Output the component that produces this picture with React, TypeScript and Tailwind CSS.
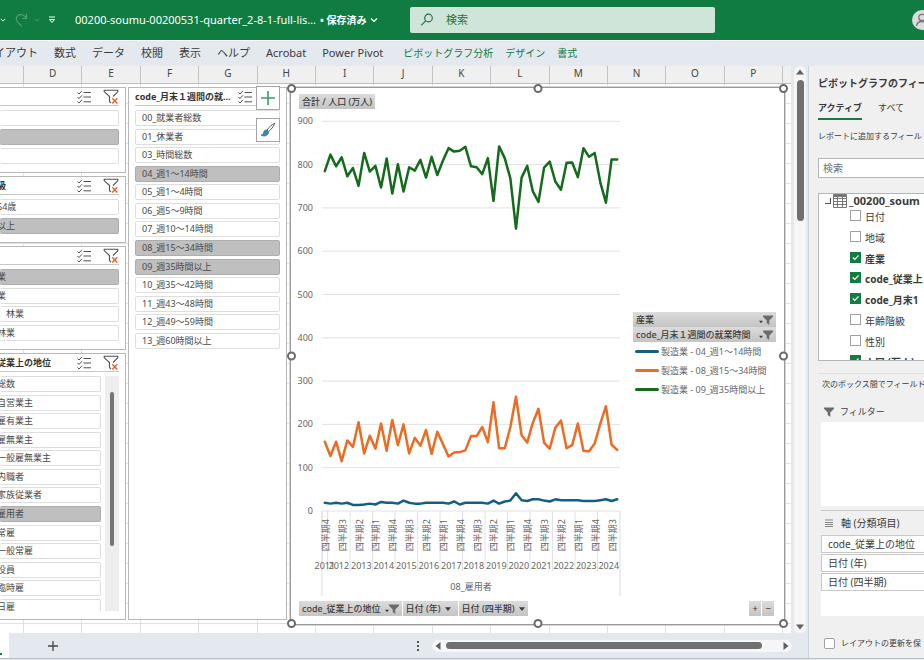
import type { ReactNode } from "react";

const columns = ["D", "E", "F", "G", "H", "I", "J", "K", "L", "M", "N", "O", "P"];

const ribbonTabs = [
  "数式",
  "データ",
  "校閲",
  "表示",
  "ヘルプ",
  "Acrobat",
  "Power Pivot",
];

const contextTabs = ["ピボットグラフ分析", "デザイン", "書式"];

const workHours = [
  "00_就業者総数",
  "01_休業者",
  "03_時間総数",
  "04_週1～14時間",
  "05_週1～4時間",
  "06_週5～9時間",
  "07_週10～14時間",
  "08_週15～34時間",
  "09_週35時間以上",
  "10_週35～42時間",
  "11_週43～48時間",
  "12_週49～59時間",
  "13_週60時間以上",
];

const positions = [
  "総数",
  "自営業主",
  "雇有業主",
  "雇無業主",
  "一般雇無業主",
  "内職者",
  "家族従業者",
  "雇用者",
  "常雇",
  "一般常雇",
  "役員",
  "臨時雇",
  "日雇",
];

const fields = [
  { label: "日付", checked: false },
  { label: "地域", checked: false },
  { label: "産業", checked: true },
  { label: "code_従業上", checked: true },
  { label: "code_月末1", checked: true },
  { label: "年齢階級", checked: false },
  { label: "性別", checked: false },
  { label: "人口 (万人)", checked: true },
];

const series = [
  {
    name: "製造業 - 04_週1～14時間",
    color: "#156082",
    values: [
      19, 17, 19, 17, 19, 14, 14, 15, 17, 15, 21, 19, 19, 17, 24, 19, 17, 17, 19,
      19, 19, 19, 17, 22, 15, 19, 19, 19, 19, 17, 24, 17, 22, 24, 41, 25, 23, 27,
      27, 24, 22, 27, 25, 25, 25, 25, 23, 23, 23, 25, 27, 23, 27,
    ],
  },
  {
    name: "製造業 - 08_週15～34時間",
    color: "#ed6b22",
    values: [
      160, 127, 160, 115, 163, 148, 205, 133, 174, 144, 202, 139, 210, 152, 200,
      133, 169, 151, 187, 132, 183, 155, 126, 135, 136, 140, 173, 173, 194, 159,
      251, 145, 145, 194, 264, 175, 158, 204, 236, 158, 144, 192, 209, 145, 152,
      202, 139, 138, 156, 202, 242, 153, 141,
    ],
  },
  {
    name: "製造業 - 09_週35時間以上",
    color: "#136b1b",
    values: [
      785, 823, 796, 817, 773, 792, 751, 827, 784, 797, 747, 814, 733, 801, 738,
      794, 786, 811, 770, 818, 776, 809, 838, 830, 832, 841, 796, 794, 778, 815,
      716, 842, 815, 768, 652, 770, 797, 738, 714, 793, 807, 761, 742, 804, 805,
      771, 838, 818, 827, 759, 712, 812, 812,
    ],
  },
];

function SearchIcon() {
  return (
    <svg className="h-3.5 w-3.5" viewBox="0 0 14 14" fill="none" stroke="#217346" strokeWidth="1.2">
      <circle cx="8.5" cy="5" r="3.8" />
      <path d="M5.8 7.8 1.2 12.4" />
    </svg>
  );
}

function Chevron({ className }: { className: string }) {
  return (
    <svg className={className} viewBox="0 0 8 6" fill="none" stroke="currentColor" strokeWidth="1.2">
      <path d="M1 1.5 4 4.5 7 1.5" />
    </svg>
  );
}

function MultiSelectIcon() {
  return (
    <svg className="h-3.5 w-3.5" viewBox="0 0 14 14" fill="none" stroke="#505050" strokeWidth="1">
      <path d="M.5 2.5 2 4 5 .8M.5 7 2 8.5 5 5.3M.5 11.5 2 13 5 9.8M6.5 2.5H14M6.5 7H14M6.5 11.8H14" />
    </svg>
  );
}

function ClearFilterIcon() {
  return (
    <svg className="h-4 w-4" viewBox="0 0 16 16" fill="none">
      <path d="M8 14 6.5 12.6V7.5L1.2 2.6V1.2H14.8V2.8L10 7.5" stroke="#505050" strokeWidth="1.1" />
      <path d="M9.3 9.2 14.3 14.4M14.3 9.2 9.3 14.4" stroke="#e8642d" strokeWidth="1.5" />
    </svg>
  );
}

function FunnelIcon({ className }: { className: string }) {
  return (
    <svg className={className} viewBox="0 0 10 10" fill="#6b6b6b">
      <path d="M0 .5H10V1.8L6.3 5.4V10L3.7 8V5.4L0 1.8Z" />
    </svg>
  );
}

function Caret({ className }: { className: string }) {
  return (
    <svg className={className} viewBox="0 0 8 8" fill="currentColor">
      <path d="M0 1.5H8L4 6.5Z" />
    </svg>
  );
}

function TitleBar() {
  return (
    <header className="flex h-10 shrink-0 items-center bg-[#107c41] text-white">
      <div className="flex w-[75px] shrink-0 items-center">
        <Chevron className="h-1.5 w-1.5" />
        <svg className="ml-2 h-4 w-4 text-[#4f9f73]" viewBox="0 0 16 16" fill="none" stroke="currentColor" strokeWidth="1.2">
          <path d="M12.5 2V6.5H8M12.3 6.3C10 2.4 6.2 1.6 3.8 3.6 1.4 5.8 2 8.5 3.6 10.2L8 14.4" />
        </svg>
        <Chevron className="ml-1 h-1.5 w-1.5 text-[#4f9f73]" />
        <svg className="ml-2 h-2 w-2" viewBox="0 0 8 8" fill="none" stroke="currentColor" strokeWidth="1">
          <path d="M1 1H7M1.5 3.5H6.5L4 6.5Z" />
        </svg>
      </div>
      <button className="flex w-[335px] shrink-0 items-center whitespace-nowrap text-[11px]">
        <span>00200-soumu-00200531-quarter_2-8-1-full-lis…</span>
        <span className="ml-1 text-[10px] font-bold">• 保存済み</span>
        <Chevron className="ml-1 h-2 w-2" />
      </button>
      <label className="flex h-[26px] w-[33%] items-center gap-3 rounded-xs bg-[#d0e5d9] px-2.5">
        <SearchIcon />
        <input
          aria-label="検索"
          className="min-w-0 flex-1 bg-transparent text-[11px] outline-none placeholder:text-[#217346]"
          placeholder="検索"
        />
      </label>
      <button aria-label="アカウント" className="-mr-2 ml-auto h-5 w-5 shrink-0 rounded-full bg-[#dcdcdc]">
        <svg viewBox="0 0 20 20" fill="none" stroke="#777" strokeWidth="1.3">
          <circle cx="10" cy="7.5" r="3.2" />
          <path d="M4.5 16C5 12.5 7.5 11.5 10 11.5S15 12.5 15.5 16" />
        </svg>
      </button>
    </header>
  );
}

function Ribbon() {
  return (
    <nav className="flex h-[26px] shrink-0 items-center overflow-hidden border-t border-white bg-[#e4e8ef] text-[11px] whitespace-nowrap text-[#3b3b3b]">
      <div className="flex w-[54px] shrink-0 justify-end pr-4">
        <button>レイアウト</button>
      </div>
      <div className="flex gap-4">
        {ribbonTabs.map((tab) => (
          <button key={tab}>{tab}</button>
        ))}
      </div>
      <div className="ml-5 flex gap-3 text-[10px]">
        {contextTabs.map((tab) => (
          <button className="text-[#107c41]" key={tab}>
            {tab}
          </button>
        ))}
      </div>
    </nav>
  );
}

type SlicerProps = {
  title: string;
  items: string[];
  selected: number[];
  listHeight: string;
  className?: string;
  clipped?: boolean;
  scroll?: boolean;
};

function Slicer({ title, items, selected, listHeight, className = "", clipped, scroll }: SlicerProps) {
  return (
    <section
      className={`flex flex-col overflow-hidden border border-[#b8b8b8] bg-white pr-1.5 ${
        clipped ? "border-l-0" : "pl-1.5"
      } ${className}`}
    >
      <div className="flex h-[18px] shrink-0 items-center border-b border-[#c8c8c8]">
        <h2
          className={`min-w-0 flex-1 overflow-hidden text-[9px] leading-3 font-bold whitespace-nowrap text-[#333] ${
            clipped ? "-indent-[3px]" : ""
          }`}
        >
          {title}
        </h2>
        <button aria-label="複数選択">
          <MultiSelectIcon />
        </button>
        <button aria-label="フィルターのクリア" className="ml-3">
          <ClearFilterIcon />
        </button>
      </div>
      <div className="mt-1 flex min-h-0 gap-1 overflow-hidden">
        <div className={`flex min-w-0 flex-1 flex-col justify-between ${listHeight}`}>
          {items.map((item, index) => (
            <button
              className={`h-4 shrink-0 overflow-hidden rounded-xs border text-left text-[9px] leading-[14px] whitespace-nowrap text-[#4a4a4a] ${
                selected.includes(index) ? "border-[#adadad] bg-[#bfbfbf]" : "border-[#dedede] bg-white"
              } ${clipped ? "border-l-0 -indent-[3px]" : "pl-1.5"}`}
              key={index}
            >
              {item}
            </button>
          ))}
        </div>
        {scroll && (
          <div className="flex w-3.5 shrink-0 justify-center bg-[#eeeeee] pt-4">
            <div className="h-[154px] w-1 rounded-full bg-[#757575]" />
          </div>
        )}
      </div>
    </section>
  );
}

const plotLeft = 31;
const plotRight = 329;
const baseline = 401;
const step = (plotRight - plotLeft) / 53;
const yOf = (value: number) => baseline - value * 0.433;
const xOf = (index: number) => plotLeft + step * (index + 0.5);

function LineChart() {
  const years = Array.from({ length: 13 }, (_, i) => 2012 + i);
  return (
    <svg
      className="h-[490px] w-[335px] shrink-0 text-[9px]"
      viewBox="0 0 335 490"
      fill="#666"
      role="img"
      aria-label="合計 / 人口 (万人)"
    >
      {[0, 100, 200, 300, 400, 500, 600, 700, 800, 900].map((tick) => (
        <g key={tick}>
          <path d={`M${plotLeft} ${yOf(tick)}H${plotRight}`} stroke="#e2e2e2" />
          <text x="22" y={yOf(tick) + 3} textAnchor="end">
            {tick}
          </text>
        </g>
      ))}
      {[0, ...years.map((_, i) => 1 + i * 4)].map((index) => (
        <path d={`M${plotLeft + step * index} ${baseline}V461`} key={index} stroke="#e2e2e2" />
      ))}
      <path d={`M${plotLeft} ${baseline}V486M${plotRight} ${baseline}V486`} stroke="#dcdcdc" />
      {Array.from({ length: 18 }, (_, i) => (
        <text
          key={i}
          textAnchor="end"
          transform={`translate(${xOf(i * 3) + 4} 409) rotate(-90)`}
        >
          四半期{4 - (i % 4)}
        </text>
      ))}
      <text x={xOf(0)} y="459" textAnchor="middle">
        2011
      </text>
      {years.map((year, i) => (
        <text key={year} x={xOf(2.5 + i * 4)} y="459" textAnchor="middle">
          {year}
        </text>
      ))}
      <text x="180" y="480" textAnchor="middle">
        08_雇用者
      </text>
      {series.map((line) => (
        <polyline
          fill="none"
          key={line.name}
          points={line.values.map((value, i) => `${xOf(i)},${yOf(value)}`).join(" ")}
          stroke={line.color}
          strokeLinejoin="round"
          strokeLinecap="round"
          strokeWidth="2.5"
        />
      ))}
    </svg>
  );
}

function FieldButton({ children, className = "" }: { children: ReactNode; className?: string }) {
  return (
    <button
      className={`flex h-[15px] items-center bg-linear-to-b from-[#dcdcdc] to-[#c4c4c4] px-[3px] text-[9px] leading-[15px] font-medium whitespace-nowrap text-[#3d3d3d] ${className}`}
    >
      {children}
    </button>
  );
}

function Handle({ className }: { className: string }) {
  return <span className={`absolute h-[9px] w-[9px] rounded-full border-2 border-[#6a6a6a] bg-white ${className}`} />;
}

function PivotChart() {
  return (
    <section className="relative flex min-w-0 flex-1 flex-col border border-[#9a9a9a] bg-white outline outline-[#d5d5d5]">
      <div className="flex px-2 pt-1.5">
        <FieldButton>合計 / 人口 (万人)</FieldButton>
      </div>
      <div className="mt-px flex min-w-0">
        <LineChart />
        <div className="mr-2 ml-auto w-[143px] pt-[202px]">
          <FieldButton className="w-full">
            産業
            <Caret className="mt-1 ml-auto h-1 w-1" />
            <FunnelIcon className="h-2.5 w-2.5" />
          </FieldButton>
          <FieldButton className="w-full">
            code_月末１週間の就業時間
            <Caret className="mt-1 ml-auto h-1 w-1" />
            <FunnelIcon className="h-2.5 w-2.5" />
          </FieldButton>
          <ul className="text-[9px] leading-[19px] whitespace-nowrap text-[#666]">
            {series.map((line) => (
              <li className="flex items-center gap-0.5 pl-0.5" key={line.name}>
                <span className="h-[3px] w-6 shrink-0 rounded-full" style={{ backgroundColor: line.color }} />
                {line.name}
              </li>
            ))}
          </ul>
        </div>
      </div>
      <div className="flex gap-px pt-px pr-2.5 pl-2">
        <FieldButton>
          code_従業上の地位
          <Caret className="mt-1 ml-1 h-1 w-1" />
          <FunnelIcon className="h-2.5 w-2.5" />
        </FieldButton>
        <FieldButton>
          日付 (年)
          <Caret className="mx-1 h-1.5 w-1.5" />
        </FieldButton>
        <FieldButton>
          日付 (四半期)
          <Caret className="ml-1 h-1.5 w-1.5" />
        </FieldButton>
        <FieldButton className="ml-auto w-3 justify-center">+</FieldButton>
        <FieldButton className="w-3 justify-center">−</FieldButton>
      </div>
      <Handle className="-top-1 -left-1" />
      <Handle className="-top-1 left-1/2 -translate-x-1/2" />
      <Handle className="-top-1 -right-1" />
      <Handle className="top-1/2 -left-1 -translate-y-1/2" />
      <Handle className="top-1/2 -right-1 -translate-y-1/2" />
      <Handle className="-bottom-1 -left-1" />
      <Handle className="-bottom-1 left-1/2 -translate-x-1/2" />
      <Handle className="-right-1 -bottom-1" />
      <div className="absolute -top-0.5 -left-[35px] flex flex-col gap-2">
        <button aria-label="グラフ要素" className="flex h-6 w-6 items-center justify-center border border-[#a5a5a5] bg-white">
          <svg className="h-4 w-4" viewBox="0 0 16 16" fill="none" stroke="#3f9d69" strokeWidth="1.6">
            <path d="M8 1V15M1 8H15" />
          </svg>
        </button>
        <button aria-label="グラフ スタイル" className="flex h-6 w-6 items-center justify-center border border-[#a5a5a5] bg-white">
          <svg className="h-4 w-4" viewBox="0 0 16 16">
            <path d="M14.8 1.2C12 2.6 9 5 7 8L8.6 9.6C11.3 7.4 13.6 4.6 14.8 1.2Z" fill="#fff" stroke="#555" strokeWidth="1" />
            <path d="M6.6 8C4.2 7.8 3.8 9.6 3.4 11.3 3 12.5 2 13 1 13 3 15 8.4 14.4 8.6 10Z" fill="#3a86b4" stroke="#27658c" strokeWidth=".6" />
          </svg>
        </button>
      </div>
    </section>
  );
}

function Sheet() {
  return (
    <div className="flex min-h-0 flex-1 flex-col overflow-hidden">
      <div className="flex h-[18px] shrink-0 border-b border-[#bdbdbd] bg-[#f0f0f0] text-center text-[10px] leading-[14px] text-[#444]">
        <span className="w-6 shrink-0 border-r border-[#c4c4c4]" />
        {columns.map((column) => (
          <span className="flex-1 border-r border-[#c4c4c4]" key={column}>
            {column}
          </span>
        ))}
        <span className="w-2 shrink-0" />
      </div>
      <div className="relative min-h-0 flex-1 bg-[repeating-linear-gradient(to_bottom,#fff_0_19px,#e1e1e1_19px_20px)]">
        <div className="absolute inset-0 flex">
          <span className="w-6 shrink-0 border-r border-[#e1e1e1]" />
          {columns.map((column) => (
            <span className="flex-1 border-r border-[#e1e1e1]" key={column} />
          ))}
          <span className="w-2 shrink-0" />
        </div>
        <div className="relative flex h-full pt-[3px] pr-1.5 pb-2">
          <div className="mb-[5px] flex w-[126px] shrink-0 flex-col gap-[3px]">
            <Slicer clipped className="h-[86px] shrink-0" items={["", "", ""]} listHeight="h-[54px]" selected={[1]} title="" />
            <Slicer clipped className="h-[67px] shrink-0" items={["64歳", "以上"]} listHeight="h-[35px]" selected={[1]} title="級" />
            <Slicer
              clipped
              className="h-[104px] shrink-0"
              items={["業", "業", "、林業", "林業"]}
              listHeight="h-[72px]"
              selected={[0]}
              title=""
            />
            <Slicer
              clipped
              className="min-h-0 flex-1 pb-2"
              items={positions}
              listHeight="h-[239px]"
              scroll
              selected={[7]}
              title="従業上の地位"
            />
          </div>
          <Slicer
            className="mr-[3px] mb-[5px] ml-0.5 w-[159px] shrink-0"
            items={workHours}
            listHeight="h-[239px]"
            selected={[3, 7, 8]}
            title="code_月末１週間の就…"
          />
          <PivotChart />
        </div>
      </div>
    </div>
  );
}

function SheetTabs() {
  return (
    <div className="flex h-[25px] shrink-0 items-center bg-[#e4e8ef]">
      <div className="h-full w-[9px] overflow-hidden rounded-br-xs bg-white">
        <div className="h-[22px] w-0.5 border-b-2 border-[#107c41] bg-white" />
      </div>
      <button aria-label="新しいシート" className="ml-[39px] text-[#444]">
        <svg className="h-2.5 w-2.5" viewBox="0 0 10 10" stroke="currentColor" strokeWidth="1.3">
          <path d="M5 0V10M0 5H10" />
        </svg>
      </button>
      <div className="mr-4 ml-auto flex w-[376px] items-center gap-3">
        <svg className="h-2.5 w-1 shrink-0" viewBox="0 0 4 10" fill="#555">
          <path d="M1 0H3V2H1ZM1 4H3V6H1ZM1 8H3V10H1Z" />
        </svg>
        <div className="flex h-3 flex-1 items-center rounded-full bg-[#f5f6f8] px-0.5 text-[#606060]">
          <Caret className="h-2 w-2 rotate-90" />
          <div className="mr-5 ml-1 h-[7px] flex-1 rounded-full bg-[#707070]" />
          <Caret className="h-2 w-2 -rotate-90" />
        </div>
      </div>
    </div>
  );
}

function FieldPane() {
  return (
    <aside className="flex w-[116px] shrink-0 flex-col overflow-hidden border-l border-[#cdd3da] bg-[#f0f0f0] pt-2.5 pl-[9px] whitespace-nowrap text-[#3b3b3b]">
      <h2 className="text-[10px] leading-[14px] font-bold">ピボットグラフのフィール</h2>
      <div className="mt-2 flex gap-4 text-[9px] leading-5">
        <button className="border-b-2 border-[#107c41] font-bold">アクティブ</button>
        <button className="border-b-2 border-transparent">すべて</button>
      </div>
      <p className="mt-2 text-[8px] leading-4">レポートに追加するフィールド</p>
      <input
        aria-label="フィールドの検索"
        className="mt-3.5 h-5 w-full shrink-0 border border-r-0 border-[#b5b5b5] bg-white px-1 text-[10px] outline-none placeholder:text-[#707070]"
        placeholder="検索"
      />
      <div className="mt-[15px] h-[168px] shrink-0 overflow-hidden border border-r-0 border-[#b5b5b5] bg-white">
        <div className="flex h-3.5 items-center text-[11px] leading-[14px] font-bold">
          <svg className="ml-1.5 h-1.5 w-1.5 shrink-0" viewBox="0 0 6 6" fill="none" stroke="#555" strokeWidth="1.2">
            <path d="M5.5 0V5.5H0" />
          </svg>
          <svg className="mx-0.5 h-3.5 w-3.5 shrink-0" viewBox="0 0 14 14" fill="none" stroke="#777">
            <path d="M.5 .5H13.5V13.5H.5ZM.5 4.5H13.5M.5 7.5H13.5M.5 10.5H13.5M4.5 3V13.5M9.5 3V13.5" />
            <path d="M.5 2H13.5" strokeWidth="2" />
          </svg>
          _00200_soum
        </div>
        <div className="flex h-[166px] flex-col pl-[31px]">
          {fields.map((field) => (
            <label
              className={`flex flex-1 gap-1 text-[10px] leading-[18px] ${field.checked ? "font-bold" : ""}`}
              key={field.label}
            >
              <span className="relative mt-0.5 h-[11px] w-[11px] shrink-0">
                <input
                  className="block h-[11px] w-[11px] appearance-none border border-[#a0a0a0] bg-white checked:border-[#107c41] checked:bg-[#107c41]"
                  defaultChecked={field.checked}
                  type="checkbox"
                />
                <svg className="pointer-events-none absolute inset-0" viewBox="0 0 11 11" fill="none" stroke="#fff" strokeWidth="1.2">
                  <path d="M2.8 5.5 4.8 7.5 8.5 3.5" />
                </svg>
              </span>
              {field.label}
            </label>
          ))}
        </div>
      </div>
      <p className="mt-3 border-t border-[#e0e0e0] pt-0.5 pl-1 text-[8px] leading-4">次のボックス間でフィールドを</p>
      <h3 className="mt-2.5 flex items-center gap-1.5 pl-1.5 text-[9px] leading-5">
        <FunnelIcon className="h-2.5 w-2.5" />
        フィルター
      </h3>
      <div className="ml-[3px] h-[84px] shrink-0 bg-white" />
      <h3 className="mt-1 ml-[3px] flex items-center gap-2 border-t border-[#c8c8c8] pl-1 text-[10px] leading-6">
        <svg className="h-2 w-2" viewBox="0 0 8 8" stroke="#888">
          <path d="M0 1H8M0 3.5H8M0 5.5H8M0 7.5H8" />
        </svg>
        軸 (分類項目)
      </h3>
      <div className="ml-[3px] flex h-[81px] shrink-0 flex-col gap-px bg-white">
        {["code_従業上の地位", "日付 (年)", "日付 (四半期)"].map((field) => (
          <button
            className="h-[18px] border border-r-0 border-[#c8c8c8] bg-white pl-1.5 text-left text-[10px] leading-4"
            key={field}
          >
            {field}
          </button>
        ))}
      </div>
      <label className="mt-[19px] flex items-center gap-1.5 pl-1.5 text-[8px] leading-4">
        <input className="h-[11px] w-[11px] shrink-0 appearance-none rounded-xs border border-[#a0a0a0] bg-white" type="checkbox" />
        レイアウトの更新を保
      </label>
    </aside>
  );
}

export default function App() {
  return (
    <div className="flex h-screen flex-col overflow-hidden bg-[#e4e8ef] font-['Noto_Sans','Noto_Sans_CJK_JP',sans-serif]">
      <TitleBar />
      <Ribbon />
      <main className="flex min-h-0 flex-1 border-b border-[#b9bec5]">
        <div className="flex min-w-0 flex-1 flex-col">
          <div className="flex min-h-0 flex-1">
            <div className="flex min-w-0 flex-1 flex-col">
              <Sheet />
            </div>
            <div className="ml-[3px] flex w-3 shrink-0 flex-col items-center rounded-full bg-[#f5f5f5] py-0.5 text-[#606060]">
              <Caret className="h-2 w-2 rotate-180" />
              <div className="mt-1 h-[141px] w-[7px] rounded-full bg-[#707070]" />
              <Caret className="mt-auto h-2 w-2" />
            </div>
            <div className="w-0.5" />
          </div>
          <SheetTabs />
        </div>
        <FieldPane />
      </main>
      <div className="h-px shrink-0" />
    </div>
  );
}
